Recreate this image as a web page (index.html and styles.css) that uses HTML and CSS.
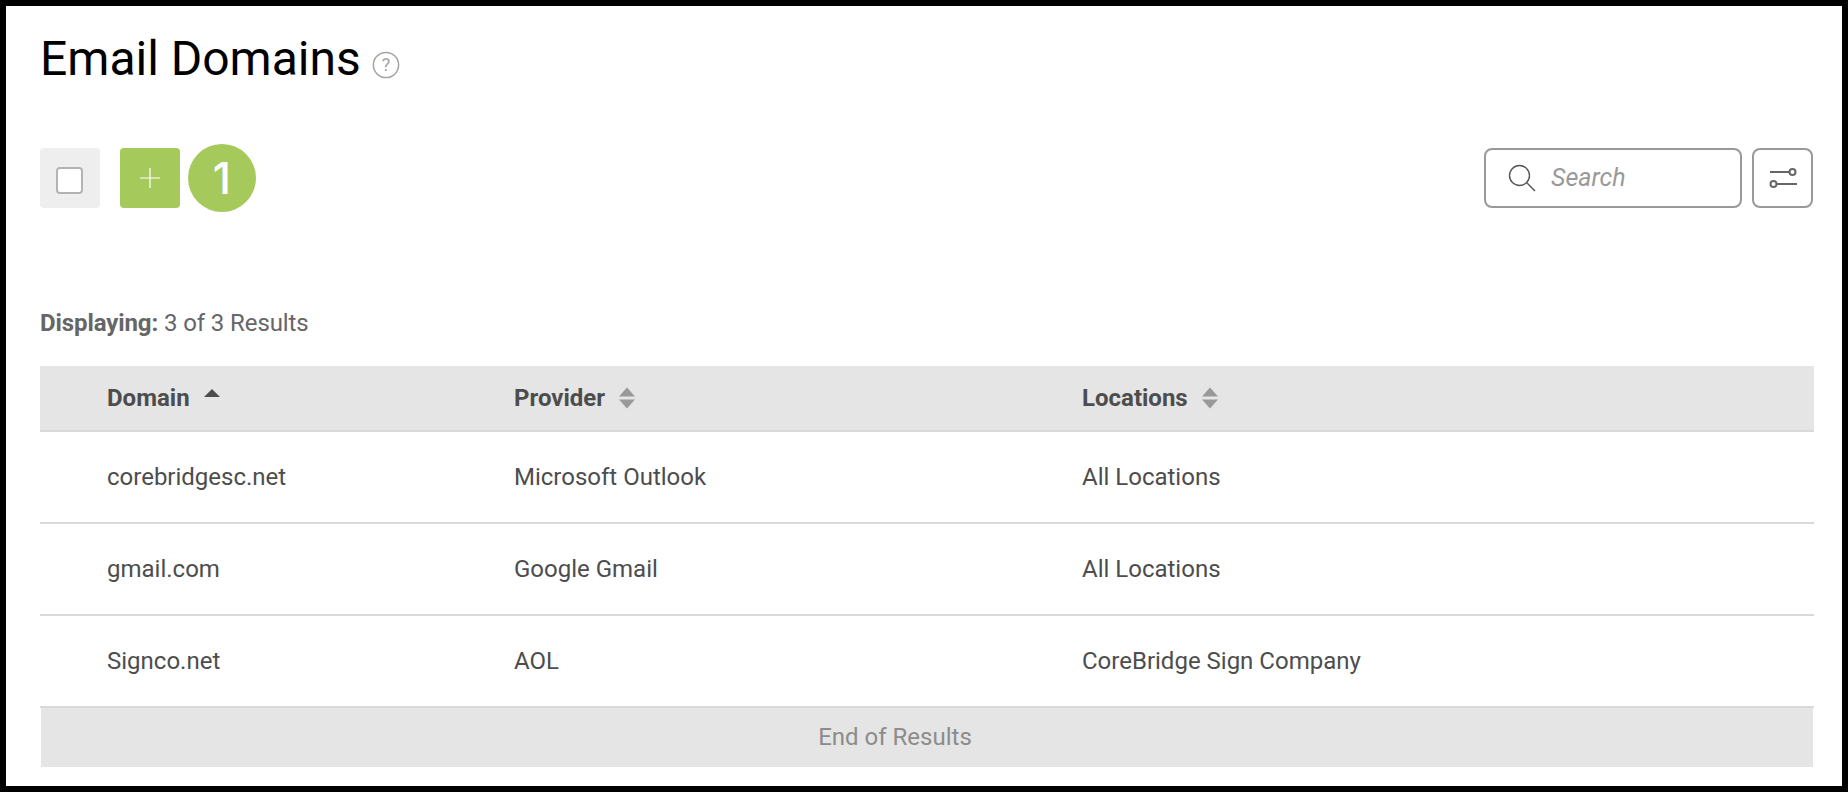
FILE: index.html
```html
<!DOCTYPE html>
<html lang="en">
<head>
<meta charset="utf-8">
<title>Email Domains</title>
<link rel="stylesheet" href="styles.css">
</head>
<body>
<main class="frame">
  <header class="title-row">
    <h1 class="title">Email Domains</h1>
    <svg class="help" viewBox="0 0 28 28" width="28" height="28" aria-hidden="true">
      <circle cx="14" cy="14" r="12.6" fill="none" stroke="#a3a3a3" stroke-width="1.5"/>
      <text x="14" y="20" text-anchor="middle" class="help-mark">?</text>
    </svg>
  </header>

  <section class="toolbar">
    <div class="tools-left">
      <div class="select-box"><span class="check"></span></div>
      <button class="add" type="button" aria-label="Add">
        <svg viewBox="0 0 20 20" width="20" height="20"><path d="M10 0v20M0 10h20" stroke="#fff" stroke-width="1.2" fill="none"/></svg>
        <span class="badge">1</span>
      </button>
    </div>
    <div class="tools-right">
      <div class="search">
        <svg viewBox="0 0 28 28" width="28" height="28" aria-hidden="true">
          <circle cx="11.5" cy="11.5" r="10" fill="none" stroke="#555" stroke-width="1.4"/>
          <path d="M18.8 18.8 27 27" stroke="#555" stroke-width="1.4" fill="none"/>
        </svg>
        <span class="search-text">Search</span>
      </div>
      <button class="filter" type="button" aria-label="Filter">
        <svg viewBox="0 0 28 20" width="28" height="20">
          <path d="M1 4h20M8 16h20" stroke="#666" stroke-width="2" fill="none"/>
          <circle cx="23.5" cy="4" r="3" fill="#fff" stroke="#666" stroke-width="2"/>
          <circle cx="4.5" cy="16" r="3" fill="#fff" stroke="#666" stroke-width="2"/>
        </svg>
      </button>
    </div>
  </section>

  <p class="count"><b>Displaying:</b> 3 of 3 Results</p>

  <section class="table">
    <div class="row head">
      <div class="cell">Domain<svg class="sort" viewBox="0 0 16 22" width="16" height="22"><path d="M8 2 16 10H0z" fill="#4d4d4d"/></svg></div>
      <div class="cell">Provider<svg class="sort" viewBox="0 0 16 22" width="16" height="22"><path d="M8 .5 16 9.5H0zM0 12.5H16L8 21.5z" fill="#999"/></svg></div>
      <div class="cell">Locations<svg class="sort" viewBox="0 0 16 22" width="16" height="22"><path d="M8 .5 16 9.5H0zM0 12.5H16L8 21.5z" fill="#999"/></svg></div>
    </div>
    <div class="row">
      <div class="cell">corebridgesc.net</div>
      <div class="cell">Microsoft Outlook</div>
      <div class="cell">All Locations</div>
    </div>
    <div class="row">
      <div class="cell">gmail.com</div>
      <div class="cell">Google Gmail</div>
      <div class="cell">All Locations</div>
    </div>
    <div class="row">
      <div class="cell">Signco.net</div>
      <div class="cell">AOL</div>
      <div class="cell">CoreBridge Sign Company</div>
    </div>
    <div class="end">End of Results</div>
  </section>
</main>
</body>
</html>
```
FILE: styles.css
```css
* { box-sizing: border-box; }
html, body { margin: 0; height: 100%; background: #fff; }
body { font-family: Roboto, "Liberation Sans", sans-serif; color: #4d4d4d; }

.frame {
  width: 1848px;
  height: 792px;
  border: 6px solid #000;
  padding: 0 28px 0 34px;
  overflow: hidden;
}

.title-row { display: flex; align-items: center; height: 88px; padding-top: 18px; }
.title { margin: 0; font-size: 48px; font-weight: 400; line-height: 60px; color: #000; }
.help { margin: 12px 0 0 11px; }
.help-mark { font-size: 18px; fill: #a3a3a3; font-family: Roboto, sans-serif; }

.toolbar { display: flex; justify-content: space-between; margin-top: 54px; height: 60px; }
.tools-left, .tools-right { display: flex; }
.select-box {
  width: 60px; height: 60px; background: #eee; border-radius: 4px;
  display: flex; align-items: center; justify-content: center;
}
.check { width: 27px; height: 27px; margin: 4px 1px 0 0; background: #fff; border: 2px solid #b3b3b3; border-radius: 4px; }
.add {
  position: relative; width: 60px; height: 60px; margin-left: 20px; padding: 0;
  background: #a5ca5b; border: 0; border-radius: 4px;
  display: flex; align-items: center; justify-content: center;
}
.badge {
  position: absolute; left: 68px; top: -4px; width: 68px; height: 68px;
  border-radius: 50%; background: #a5ca5b; color: #fff;
  font: 500 44px/68px Inter, Roboto, sans-serif; text-align: center;
}

.tools-right { gap: 10px; margin-right: 1px; }
.search {
  width: 258px; height: 60px; border: 2px solid #999; border-radius: 8px;
  display: flex; align-items: center; padding-left: 22px; gap: 15px;
}
.search-text { margin-top: -2px; font-size: 25px; font-style: italic; color: #999; }
.filter {
  width: 61px; height: 60px; padding: 0; background: #fff; border: 2px solid #999; border-radius: 8px;
  display: flex; align-items: center; justify-content: center;
}

.count { margin: 101px 0 0; height: 28px; font-size: 24px; line-height: 28px; letter-spacing: -.1px; color: #666; }
.count b { font-weight: 700; }

.table { margin-top: 29px; width: 1774px; }
.row {
  display: grid; grid-template-columns: 407px 568px 1fr; align-items: center;
  height: 92px; padding-left: 67px; border-bottom: 2px solid #d9d9d9;
  font-size: 24px; color: #4d4d4d;
}
.row.head { height: 66px; background: #e5e5e5; font-weight: 700; }
.cell { display: flex; align-items: center; white-space: pre; }
.sort { margin-left: 14px; }
.end {
  width: 1772px; height: 59px; margin-left: 1px; padding-right: 64px; background: #e5e5e5;
  font-size: 24px; line-height: 59px; text-align: center; color: #8c8c8c;
}
```
